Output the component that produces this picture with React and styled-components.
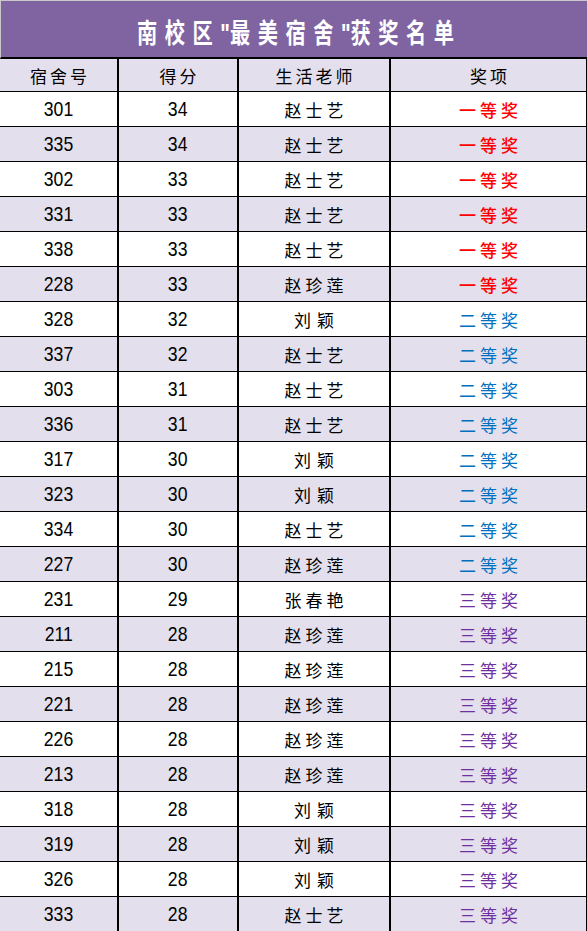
import React from 'react'
import styled, { createGlobalStyle } from 'styled-components'

const GlobalStyle = createGlobalStyle`
  html, body {
    margin: 0;
    padding: 0;
    background: #ffffff;
    overflow: hidden;
  }
`

const rows = [
  ['301', '34', '赵士艺', 1],
  ['335', '34', '赵士艺', 1],
  ['302', '33', '赵士艺', 1],
  ['331', '33', '赵士艺', 1],
  ['338', '33', '赵士艺', 1],
  ['228', '33', '赵珍莲', 1],
  ['328', '32', '刘颖', 2],
  ['337', '32', '赵士艺', 2],
  ['303', '31', '赵士艺', 2],
  ['336', '31', '赵士艺', 2],
  ['317', '30', '刘颖', 2],
  ['323', '30', '刘颖', 2],
  ['334', '30', '赵士艺', 2],
  ['227', '30', '赵珍莲', 2],
  ['231', '29', '张春艳', 3],
  ['211', '28', '赵珍莲', 3],
  ['215', '28', '赵珍莲', 3],
  ['221', '28', '赵珍莲', 3],
  ['226', '28', '赵珍莲', 3],
  ['213', '28', '赵珍莲', 3],
  ['318', '28', '刘颖', 3],
  ['319', '28', '刘颖', 3],
  ['326', '28', '刘颖', 3],
  ['333', '28', '赵士艺', 3],
]

const prizes = {
  1: { text: '一等奖', color: '#ff0000' },
  2: { text: '二等奖', color: '#0070c0' },
  3: { text: '三等奖', color: '#7030a0' },
}

const Sheet = styled.div`
  width: 587px;
  height: 931px;
  overflow: hidden;
  font-family: "Noto Sans CJK SC", sans-serif;
`

const Title = styled.div`
  height: 59px;
  box-sizing: border-box;
  border-top: 1px solid #c8c8c8;
  border-left: 1px solid #c8c8c8;
  border-bottom: 2px solid #000;
  padding-top: 4px;
  background: #8064a2;
  color: #ffffff;
  display: flex;
  align-items: center;
  justify-content: center;
`

const TitleText = styled.span`
  display: inline-block;
  white-space: nowrap;
  font-size: 27px;
  font-weight: 700;
  letter-spacing: 10px;
  margin-right: -10px;
  transform: scaleX(0.75);
`

const Quote = styled.span`
  font-family: "Liberation Sans", sans-serif;
  font-weight: 700;
  letter-spacing: 0;
`

const Row = styled.div`
  display: grid;
  grid-template-columns: 119px 120px 152px 1fr;
  height: ${p => p.$h}px;
  box-sizing: border-box;
  border-bottom: 1px solid #000;
  background: ${p => (p.$shade ? '#e4dfec' : '#ffffff')};
`

const Cell = styled.div`
  display: flex;
  align-items: center;
  justify-content: center;
  border-right: 2px solid #000;
  box-sizing: border-box;
  &:last-child {
    border-right: 1px solid #000;
  }
`

const HeadText = styled.span`
  font-size: 17px;
  letter-spacing: 3px;
  margin-right: -3px;
  color: #000;
`

const Num = styled.span`
  display: inline-block;
  font-family: "Liberation Sans", sans-serif;
  font-size: 21px;
  transform: scaleX(0.84);
  color: #000;
`

const Name = styled.span`
  font-size: 17px;
  letter-spacing: ${p => (p.$wide ? 6 : 4)}px;
  margin-right: -${p => (p.$wide ? 6 : 4)}px;
  color: #000;
`

const Prize = styled.span`
  font-size: 17px;
  letter-spacing: 4px;
  margin-right: -4px;
  color: ${p => p.$color};
  font-weight: ${p => (p.$bold ? 500 : 400)};
`

export default function App() {
  return (
    <Sheet>
      <GlobalStyle />
      <Title>
        <TitleText>
          南校区<Quote>"</Quote>最美宿舍<Quote>"</Quote>获奖名单
        </TitleText>
      </Title>
      <Row $h={33} $shade>
        <Cell><HeadText>宿舍号</HeadText></Cell>
        <Cell><HeadText>得分</HeadText></Cell>
        <Cell><HeadText>生活老师</HeadText></Cell>
        <Cell><HeadText>奖项</HeadText></Cell>
      </Row>
      {rows.map(([room, score, teacher, level], i) => (
        <Row key={room} $h={35} $shade={i % 2 === 1}>
          <Cell><Num>{room}</Num></Cell>
          <Cell><Num>{score}</Num></Cell>
          <Cell><Name $wide={teacher.length === 2}>{teacher}</Name></Cell>
          <Cell>
            <Prize $color={prizes[level].color} $bold={level === 1}>
              {prizes[level].text}
            </Prize>
          </Cell>
        </Row>
      ))}
    </Sheet>
  )
}
